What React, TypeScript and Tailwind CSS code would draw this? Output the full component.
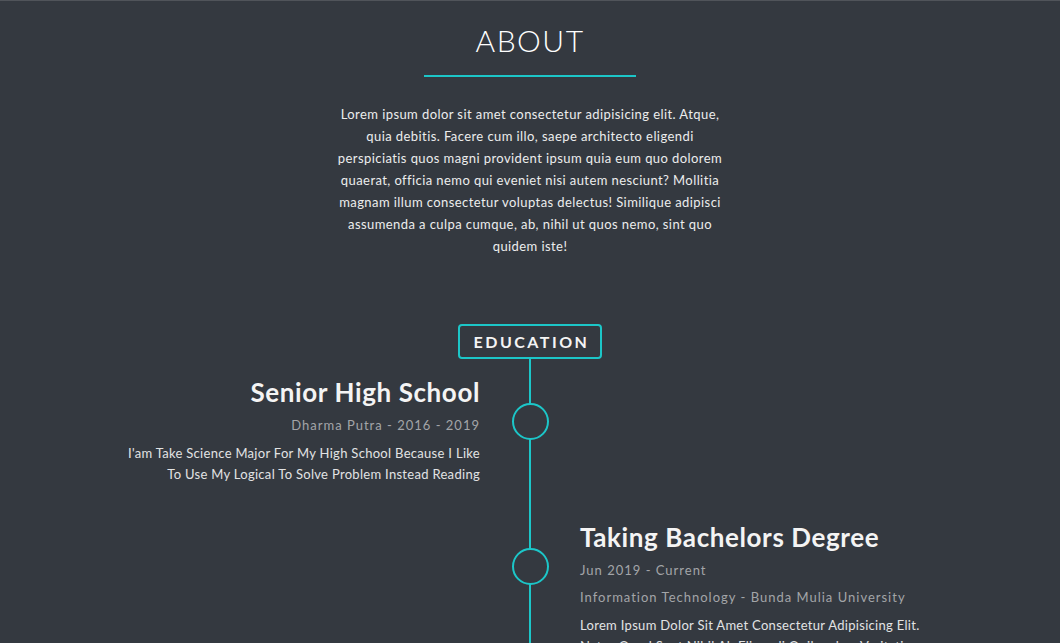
import React from 'react';

type Item = {
  side: 'left' | 'right';
  title: string;
  meta: string[];
  desc: string;
};

const items: Item[] = [
  {
    side: 'left',
    title: 'Senior High School',
    meta: ['Dharma Putra - 2016 - 2019'],
    desc: "I'am Take Science Major For My High School Because I Like To Use My Logical To Solve Problem Instead Reading",
  },
  {
    side: 'right',
    title: 'Taking Bachelors Degree',
    meta: ['Jun 2019 - Current', 'Information Technology - Bunda Mulia University'],
    desc: 'Lorem Ipsum Dolor Sit Amet Consectetur Adipisicing Elit. Natus Quod Sunt Nihil Ab Eligendi Quibusdam Veritatis Dolores Facere.',
  },
];

function Entry({ item }: { item: Item }) {
  const right = item.side === 'right';
  return (
    <div className={right ? 'text-left' : 'text-right'}>
      <h3 className="text-[26px] leading-[32px] font-bold tracking-[0.6px] text-[#f4f4f4]">{item.title}</h3>
      {item.meta.map((m) => (
        <p key={m} className="mt-[7px] text-[13px] leading-[20px] tracking-[1px] text-[#a3a5a8]">
          {m}
        </p>
      ))}
      <p
        className={`mt-[8px] text-[13px] leading-[21px] tracking-[0.3px] text-[#e2e3e4] ${
          right ? 'max-w-[360px]' : 'ml-auto max-w-[358px]'
        }`}
      >
        {item.desc}
      </p>
    </div>
  );
}

export default function App() {
  return (
    <div
      className="h-[643px] overflow-hidden bg-[#343940] border-t border-[#50545a]"
      style={{ fontFamily: 'Lato, "Open Sans", sans-serif' }}
    >
      {/* About */}
      <div className="flex flex-col items-center">
        <h1 className="mt-[19px] text-[30px] leading-[40px] tracking-[1.5px] text-white font-light">ABOUT</h1>
        <div className="mt-[15px] h-[2px] w-[212px] bg-[#1cc6c8]" />
        <p className="mt-[26px] w-[396px] text-center text-[13px] leading-[22px] tracking-[0.42px] text-[#eceded]">
          Lorem ipsum dolor sit amet consectetur adipisicing elit. Atque, quia debitis. Facere cum illo, saepe architecto
          eligendi perspiciatis quos magni provident ipsum quia eum quo dolorem quaerat, officia nemo qui eveniet nisi
          autem nesciunt? Mollitia magnam illum consectetur voluptas delectus! Similique adipisci assumenda a culpa
          cumque, ab, nihil ut quos nemo, sint quo quidem iste!
        </p>

        {/* Education */}
        <div className="mt-[67px] h-[35px] w-[144px] rounded-[4px] border-2 border-[#1cc6c8] flex items-center justify-center">
          <span className="text-[16px] font-bold tracking-[2.5px] pl-[3px] text-[#f4f4f4]">EDUCATION</span>
        </div>
      </div>

      <div className="relative h-[400px]">
        <div className="absolute left-[529px] top-0 bottom-0 w-[2px] bg-[#1cc6c8]" />
        <div className="relative grid grid-cols-[480px_100px_480px] pt-[17px]">
          {items.map((item, i) => (
            <React.Fragment key={item.title}>
              <div className={i > 0 ? 'mt-[36px]' : ''}>{item.side === 'left' && <Entry item={item} />}</div>
              <div className={`flex justify-center items-start ${i > 0 ? 'mt-[36px]' : ''}`}>
                <div className="mt-[27px] h-[37px] w-[37px] rounded-full border-2 border-[#1cc6c8] bg-[#343940]" />
              </div>
              <div className={i > 0 ? 'mt-[36px]' : ''}>{item.side === 'right' && <Entry item={item} />}</div>
            </React.Fragment>
          ))}
        </div>
      </div>
    </div>
  );
}
